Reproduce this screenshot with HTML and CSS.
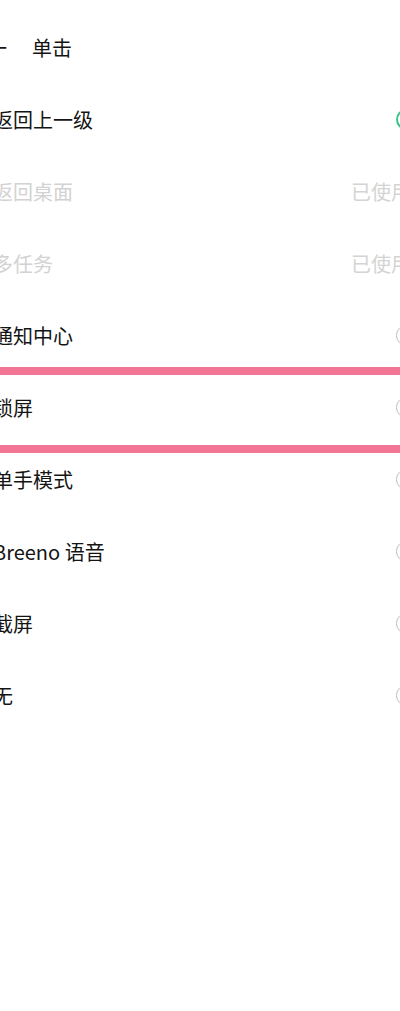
FILE: index.html
```html
<!DOCTYPE html>
<html lang="zh-CN">
<head>
  <meta charset="UTF-8" />
  <meta name="viewport" content="width=device-width, initial-scale=1.0"/>
  <title>单击</title>
  <link rel="stylesheet" href="styles.css">
</head>
<body>

<div class="page">
  <div class="section-title">
    <span class="dash">一</span>
    <span>单击</span>
  </div>

  <ul class="options">
    <li class="option">
      <span class="label">返回上一级</span>
      <span class="radio checked"></span>
    </li>
    <li class="option disabled">
      <span class="label">返回桌面</span>
      <span class="used">已使用</span>
    </li>
    <li class="option disabled">
      <span class="label">多任务</span>
      <span class="used">已使用</span>
    </li>
    <li class="option">
      <span class="label">通知中心</span>
      <span class="radio"></span>
    </li>
    <li class="option marked">
      <span class="label">锁屏</span>
      <span class="radio"></span>
    </li>
    <li class="option">
      <span class="label">单手模式</span>
      <span class="radio"></span>
    </li>
    <li class="option">
      <span class="label">Breeno 语音</span>
      <span class="radio"></span>
    </li>
    <li class="option">
      <span class="label">截屏</span>
      <span class="radio"></span>
    </li>
    <li class="option">
      <span class="label">无</span>
      <span class="radio"></span>
    </li>
  </ul>
</div>

</body>
</html>
```

FILE: styles.css
```css
html, body {
  margin: 0;
  padding: 0;
  background: #ffffff;
  overflow: hidden;
}
body {
  font-family: "Noto Sans CJK SC", "Noto Sans", sans-serif;
  color: #141414;
  height: 1011px;
}
.page {
  margin-left: -7px;
  width: 425px;
}
.section-title {
  display: flex;
  gap: 25px;
  margin-left: -6px;
  padding-top: 34px;
  padding-bottom: 21px;
  font-size: 20px;
  line-height: 28px;
}
.options {
  list-style: none;
  margin: 0;
  padding: 0;
}
.option {
  position: relative;
  display: flex;
  align-items: center;
  justify-content: space-between;
  height: 72px;
  font-size: 20px;
}
.option.disabled .label {
  color: #d2d2d2;
}
.used {
  color: #d4d4d4;
  margin-right: 7px;
}
.radio {
  width: 19px;
  height: 19px;
  margin-right: 1px;
  border: 1.5px solid #bdbdbd;
  border-radius: 50%;
}
.radio.checked {
  border: 2.5px solid #36c48b;
  width: 17px;
  height: 17px;
}
.marked::before {
  content: "";
  position: absolute;
  left: 0;
  right: 0;
  top: -4px;
  bottom: -10px;
  border-top: 8px solid #f27596;
  border-bottom: 8px solid #f27596;
}
```
